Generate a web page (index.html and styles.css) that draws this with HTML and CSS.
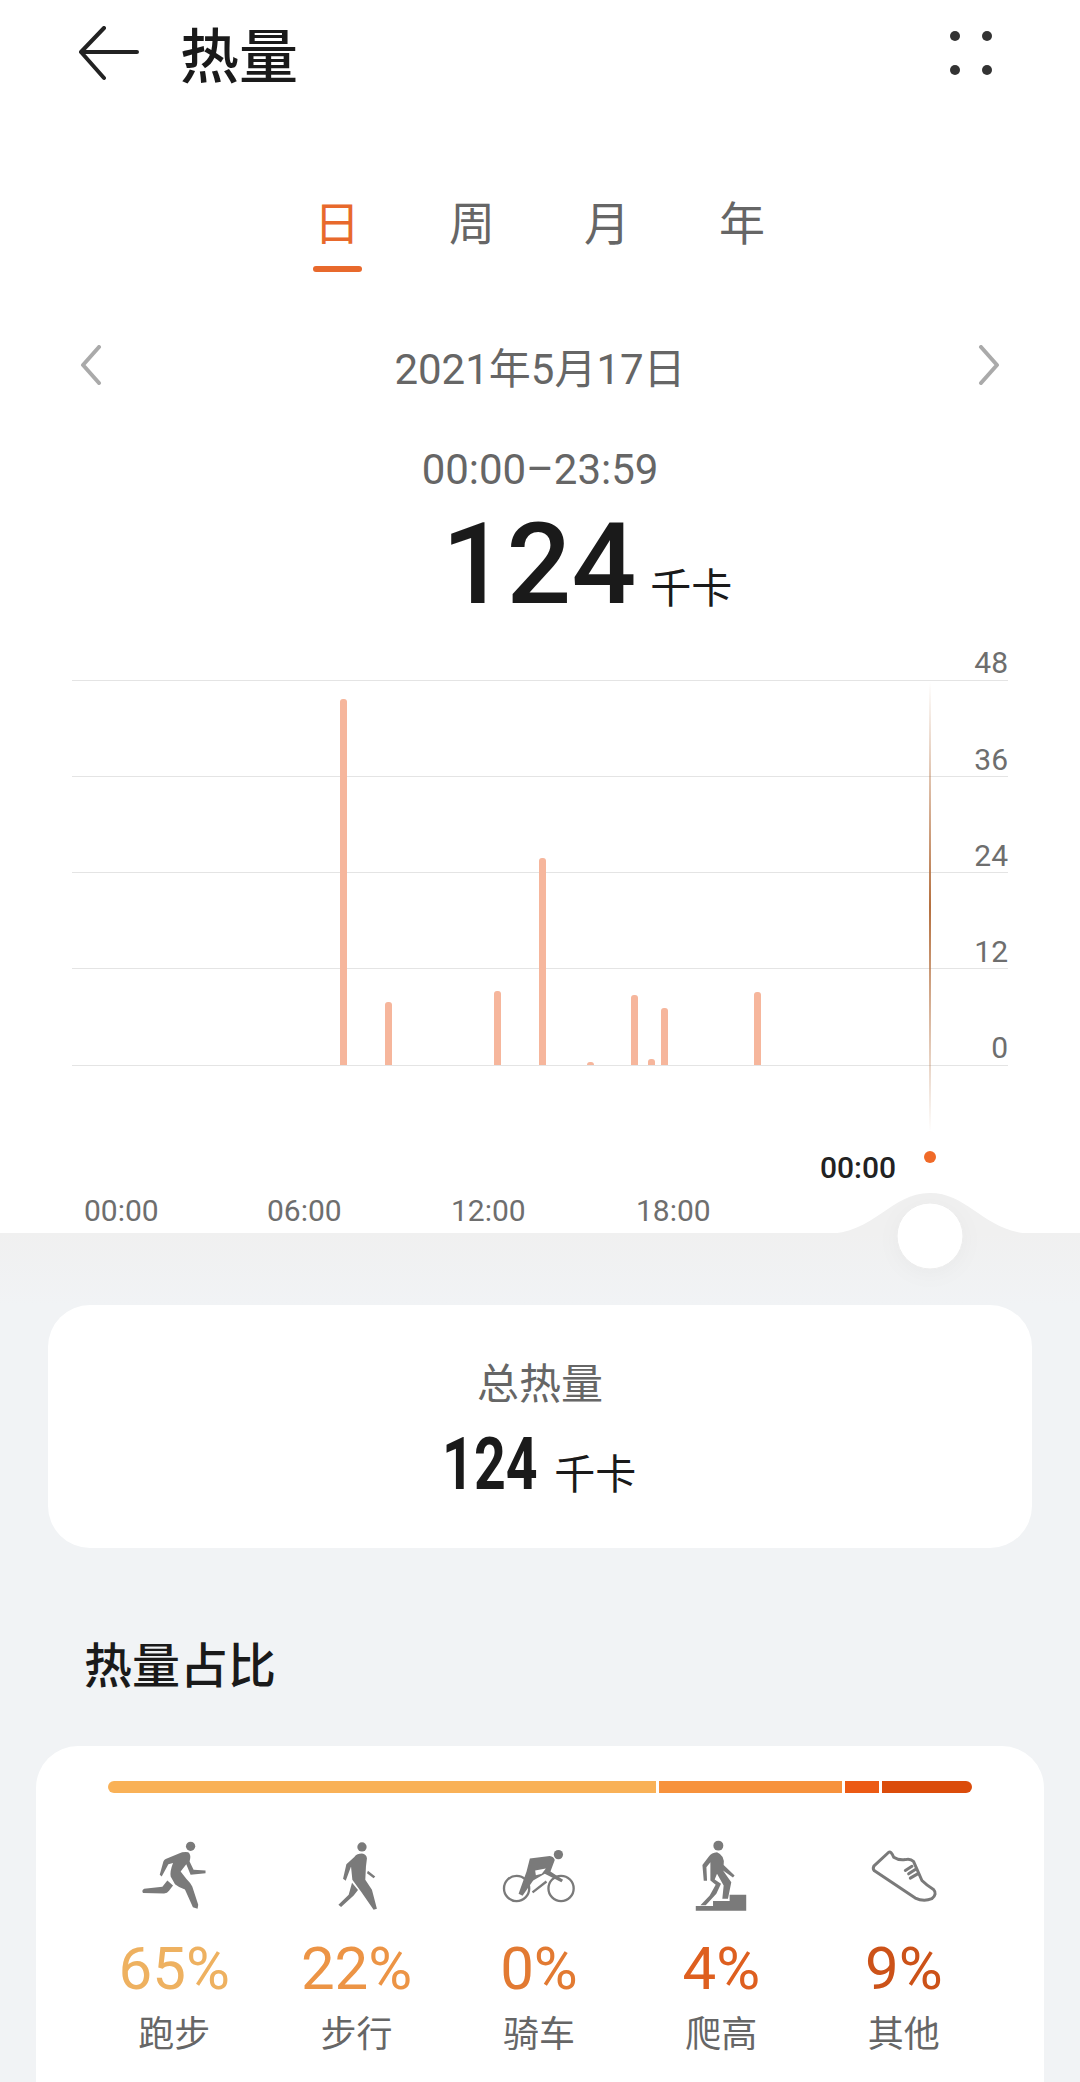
FILE: index.html
```html
<!DOCTYPE html>
<html lang="zh-CN">

<head>
    <meta charset="UTF-8">
    <meta name="viewport" content="width=device-width, initial-scale=1.0">
    <title>热量</title>
    <link rel="stylesheet" href="styles.css">
</head>

<body>
    <div class="top">
        <div class="header">
            <svg class="back" width="60" height="56" viewBox="0 0 60 56">
                <path d="M25 2 L2 26 L25 52 M2 26 H58" />
            </svg>
            <h1>热量</h1>
            <svg class="more" width="42" height="44" viewBox="0 0 42 44">
                <circle cx="5" cy="5" r="5" />
                <circle cx="37" cy="5" r="5" />
                <circle cx="5" cy="39" r="5" />
                <circle cx="37" cy="39" r="5" />
            </svg>
        </div>

        <ul class="tabs">
            <li class="active">日</li>
            <li>周</li>
            <li>月</li>
            <li>年</li>
        </ul>

        <div class="date">
            <svg class="arrow" width="24" height="40" viewBox="0 0 24 40">
                <path d="M20 2 L4 20 L20 38" />
            </svg>
            <span>2021年5月17日</span>
            <svg class="arrow" width="24" height="40" viewBox="0 0 24 40">
                <path d="M4 2 L20 20 L4 38" />
            </svg>
        </div>

        <p class="time">00:00–23:59</p>
        <p class="total"><b>124</b><span>千卡</span></p>

        <svg class="chart" width="1080" height="593" viewBox="0 640 1080 593">
            <defs>
                <linearGradient id="cursor" x1="0" y1="0" x2="0" y2="1">
                    <stop offset="0" stop-color="#b5703f" stop-opacity="0" />
                    <stop offset="0.5" stop-color="#b5703f" />
                    <stop offset="1" stop-color="#b5703f" stop-opacity="0" />
                </linearGradient>
                <clipPath id="plot">
                    <rect x="72" y="680" width="936" height="385" />
                </clipPath>
            </defs>
            <g class="grid">
                <path d="M72 680.500 H1008" />
                <path d="M72 776.500 H1008" />
                <path d="M72 872.500 H1008" />
                <path d="M72 968.500 H1008" />
                <path d="M72 1065.500 H1008" />
            </g>
            <g class="ylabels">
                <text x="1008" y="673">48</text>
                <text x="1008" y="770">36</text>
                <text x="1008" y="866">24</text>
                <text x="1008" y="962">12</text>
                <text x="1008" y="1058">0</text>
            </g>
            <g class="bars" clip-path="url(#plot)">
                <rect x="340" y="699" width="7" height="372" rx="3" />
                <rect x="385" y="1002" width="7" height="69" rx="3" />
                <rect x="494" y="991" width="7" height="80" rx="3" />
                <rect x="539" y="858" width="7" height="213" rx="3" />
                <rect x="587" y="1062" width="7" height="9" rx="3" />
                <rect x="631" y="995" width="7" height="76" rx="3" />
                <rect x="648" y="1059" width="7" height="12" rx="3" />
                <rect x="661" y="1008" width="7" height="63" rx="3" />
                <rect x="754" y="992" width="7" height="79" rx="3" />
            </g>
            <rect x="929" y="682" width="2" height="450" fill="url(#cursor)" />
            <circle class="dot" cx="930" cy="1157" r="6" />
            <text class="now" x="820" y="1178">00:00</text>
            <g class="xlabels">
                <text x="84" y="1221">00:00</text>
                <text x="267" y="1221">06:00</text>
                <text x="451" y="1221">12:00</text>
                <text x="636" y="1221">18:00</text>
            </g>
            <path class="bump" d="M825 1234 C875 1234 890 1193 930 1193 C970 1193 985 1234 1035 1234 Z" />
            <circle class="knob" cx="930" cy="1236" r="33" />
        </svg>
    </div>

    <div class="bottom">
        <div class="card sum">
            <p class="sum-title">总热量</p>
            <p class="sum-value"><b>124</b><span>千卡</span></p>
        </div>

        <h2>热量占比</h2>

        <div class="card share">
            <div class="bar">
                <i class="c1" style="width:548px"></i>
                <i class="c2" style="width:183px"></i>
                <i class="c3" style="width:34px"></i>
                <i class="c4" style="width:90px"></i>
            </div>
            <div class="items">
                <div class="item">
                    <svg class="icon" width="70" height="73" viewBox="120 245 210 220">
                        <circle cx="275" cy="264" r="14" />
                        <path d="M268 282 Q252 280 240 286 L200 302 Q195 304 193 310 L182 350 L188 355 L208 318 L222 314 Q212 340 215 355 L228 378 Q240 388 258 394 L282 448 L296 452 L298 440 L280 385 Q275 375 262 362 L245 340 L262 318 L275 350 L320 345 L320 337 L284 335 L272 310 Q278 290 268 282 Z" />
                        <path d="M205 367 L190 386 L135 392 Q126 398 132 405 L195 406 Q205 406 210 398 L222 382 Z" />
                    </svg>
                    <p class="pct t1">65%</p>
                    <p class="name">跑步</p>
                </div>
                <div class="item">
                    <svg class="icon" width="70" height="73" viewBox="665 245 210 220">
                        <circle cx="785" cy="266" r="14" />
                        <path d="M785 286 Q770 286 762 296 L738 318 L728 362 L736 368 L752 325 L756 365 L778 395 L782 400 L820 455 L830 452 L815 395 L795 365 L797 325 L800 300 Q798 288 785 286 Z" />
                        <path d="M755 374 L773 396 L760 412 L722 447 L714 440 L745 410 Z" />
                        <path d="M803 338 L825 355 L820 360 L800 345 Z" />
                    </svg>
                    <p class="pct t2">22%</p>
                    <p class="name">步行</p>
                </div>
                <div class="item">
                    <svg class="icon" width="77" height="73" viewBox="1200 240 232 220">
                        <circle class="wheel" cx="1250" cy="386" r="38" />
                        <circle class="wheel" cx="1384" cy="386" r="38" />
                        <path class="frame" d="M1298 398 L1340 365" />
                        <circle cx="1376" cy="284" r="14" />
                        <path d="M1290 296 L1350 288 Q1362 290 1365 300 L1352 335 L1390 360 L1385 367 L1335 342 L1300 362 L1268 408 L1256 402 L1280 335 Z" />
                        <path class="cut" d="M1306 332 L1338 326 L1326 342 L1308 346 Z" />
                    </svg>
                    <p class="pct t3">0%</p>
                    <p class="name">骑车</p>
                </div>
                <div class="item">
                    <svg class="icon" width="70" height="73" viewBox="319 243 210 220">
                        <circle cx="416" cy="260" r="15" />
                        <path d="M412 280 Q395 282 388 292 L368 318 L372 366 L382 366 L380 325 L392 310 L392 365 L408 378 L390 410 L362 440 L378 440 L410 405 L424 375 L405 362 L412 345 L432 380 L428 420 L445 420 L455 370 L430 335 L460 356 L465 350 L432 318 Q436 290 412 280 Z" />
                        <path d="M348 442 H400 V427 H450 V408 H500 V456 H348 Z" />
                    </svg>
                    <p class="pct t4">4%</p>
                    <p class="name">爬高</p>
                </div>
                <div class="item">
                    <svg class="icon shoe" width="70" height="73" viewBox="866 243 210 220">
                        <path d="M925 280 L880 322 Q876 330 882 336 L1005 418 Q1030 430 1055 420 Q1072 405 1060 392 Q1040 380 1025 365 L1000 308 Q990 298 975 302 Q955 305 940 295 Q932 275 925 280 Z" />
                        <path d="M975 335 L995 322 M985 345 L1005 332 M990 358 L1012 345" />
                    </svg>
                    <p class="pct t5">9%</p>
                    <p class="name">其他</p>
                </div>
            </div>
        </div>
    </div>
</body>

</html>
```

FILE: styles.css
```css
* {
    margin: 0;
    padding: 0;
    box-sizing: border-box;
}

html,
body {
    width: 1080px;
    height: 2082px;
    overflow: hidden;
}

body {
    font-family: Roboto, "Noto Sans CJK SC", sans-serif;
    background-color: #f1f3f5;
    color: #1a1a1a;
}

.top {
    height: 1233px;
    background-color: #fff;
}

.header {
    height: 108px;
    padding: 26px 90px 0 79px;
    display: flex;
    align-items: flex-start;
}

.back path {
    fill: none;
    stroke: #222;
    stroke-width: 4;
    stroke-linecap: round;
    stroke-linejoin: round;
}

h1 {
    margin-left: 41px;
    margin-top: 3px;
    font-size: 59px;
    line-height: 58px;
    font-weight: 500;
}

.more {
    margin-left: auto;
    margin-top: 5px;
    margin-right: -2px;
    fill: #333;
}

.tabs {
    height: 84px;
    margin-top: 83px;
    display: flex;
    justify-content: center;
    list-style: none;
    padding-right: 1px;
}

.tabs li {
    width: 135px;
    text-align: center;
    font-size: 46px;
    line-height: 66px;
    color: #666;
    position: relative;
}

.tabs .active {
    color: #e8692c;
}

.tabs .active::after {
    content: "";
    position: absolute;
    left: 43px;
    top: 75px;
    width: 49px;
    height: 6px;
    border-radius: 3px;
    background-color: #e8692c;
}

.date {
    height: 60px;
    margin-top: 60px;
    padding: 0 79px;
    display: flex;
    justify-content: space-between;
    align-items: center;
    font-size: 42px;
    color: #666;
}

.arrow path {
    fill: none;
    stroke: #aaa;
    stroke-width: 4;
    stroke-linecap: round;
    stroke-linejoin: round;
}

.time {
    margin-top: 47px;
    text-align: center;
    font-size: 42px;
    line-height: 56px;
    color: #666;
}

.total {
    height: 116px;
    margin-top: 8px;
    text-align: center;
    line-height: 116px;
    padding-left: 94px;
}

.total b {
    font-size: 114px;
    font-weight: 500;
}

.total span {
    margin-left: 14px;
    font-size: 41px;
}

.chart {
    display: block;
    margin-top: 18px;
    overflow: visible;
}

.grid path {
    stroke: #e4e4e4;
    stroke-width: 1;
}

.bars rect {
    fill: #f6b69c;
}

.ylabels text {
    font-size: 30px;
    fill: #6e6e6e;
    text-anchor: end;
}

.xlabels text {
    font-size: 30px;
    fill: #6e6e6e;
}

.now {
    font-size: 30px;
    font-weight: 500;
    fill: #222;
}

.dot {
    fill: #f06a28;
}

.bump {
    fill: #f0f0f0;
}

.knob {
    fill: #fff;
    stroke: #ececec;
    stroke-width: 1;
    filter: drop-shadow(0 4px 10px rgba(0, 0, 0, 0.03));
}

.bottom {
    padding-top: 72px;
    background: linear-gradient(#f0f0f0, #f1f3f5 72px);
}

.card {
    background-color: #fff;
    border-radius: 42px;
}

.sum {
    height: 243px;
    margin: 0 48px;
    padding-top: 54px;
    text-align: center;
}

.sum-title {
    font-size: 42px;
    line-height: 52px;
    color: #666;
}

.sum-value {
    margin-top: 15px;
    line-height: 76px;
    padding-right: 3px;
}

/* 总热量的数字是窄体，没有装窄字体，用 Roboto 压窄 */
.sum-value b {
    display: inline-block;
    margin: 0 -14px;
    font-size: 73px;
    font-weight: 700;
    transform: scaleX(0.76);
}

.sum-value span {
    margin-left: 16px;
    font-size: 41px;
}

h2 {
    margin: 89px 0 0 84px;
    font-size: 48px;
    line-height: 60px;
    font-weight: 500;
}

.share {
    height: 400px;
    margin: 49px 36px 0;
    padding: 35px 0 0 47px;
}

.bar {
    width: 864px;
    height: 12px;
    margin-left: 25px;
    display: flex;
    gap: 3px;
    border-radius: 6px;
    overflow: hidden;
}

.c1 {
    background-color: #f9b157;
}

.c2 {
    background-color: #f7923c;
}

.c3 {
    background-color: #ec5a14;
}

.c4 {
    background-color: #db4c0b;
}

.items {
    width: 912px;
    margin-top: 47px;
    display: grid;
    grid-template-columns: repeat(5, 182.4px);
}

.item {
    display: flex;
    flex-direction: column;
    align-items: center;
}

.icon {
    display: block;
    fill: #7a7a7a;
}

.icon .cut {
    fill: #fff;
}

.wheel,
.frame {
    fill: none;
    stroke: #7a7a7a;
    stroke-width: 7;
}

.shoe path {
    fill: none;
    stroke: #7a7a7a;
    stroke-width: 9;
    stroke-linecap: round;
    stroke-linejoin: round;
}

.pct {
    margin-top: 21px;
    font-size: 60px;
    line-height: 70px;
}

.t1 {
    color: #eeb160;
}

.t2 {
    color: #ec9445;
}

.t3 {
    color: #e27a32;
}

.t4 {
    color: #de5f1f;
}

.t5 {
    color: #cc5218;
}

.name {
    margin-top: 5px;
    font-size: 36px;
    line-height: 52px;
    color: #666;
}
```
